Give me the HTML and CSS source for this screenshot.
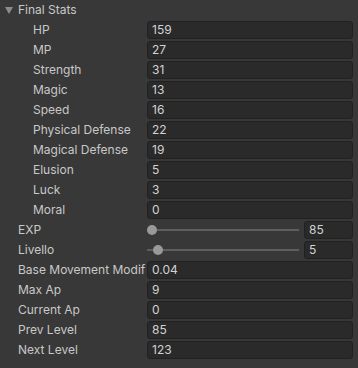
FILE: index.html
```html
<!DOCTYPE html>
<html>
<head>
<meta charset="utf-8">
<link rel="stylesheet" href="styles.css">
</head>
<body>
<div class="inspector">
  <div class="row header">
    <span class="fold"></span>
    <span class="label head-label">Final Stats</span>
  </div>
  <div class="row"><span class="label indent">HP</span><span class="field">159</span></div>
  <div class="row"><span class="label indent">MP</span><span class="field">27</span></div>
  <div class="row"><span class="label indent">Strength</span><span class="field">31</span></div>
  <div class="row"><span class="label indent">Magic</span><span class="field">13</span></div>
  <div class="row"><span class="label indent">Speed</span><span class="field">16</span></div>
  <div class="row"><span class="label indent">Physical Defense</span><span class="field">22</span></div>
  <div class="row"><span class="label indent">Magical Defense</span><span class="field">19</span></div>
  <div class="row"><span class="label indent">Elusion</span><span class="field">5</span></div>
  <div class="row"><span class="label indent">Luck</span><span class="field">3</span></div>
  <div class="row"><span class="label indent">Moral</span><span class="field">0</span></div>
  <div class="row">
    <span class="label">EXP</span>
    <div class="slider">
      <div class="track"><span class="thumb" style="left:0px"></span></div>
      <span class="field small">85</span>
    </div>
  </div>
  <div class="row">
    <span class="label">Livello</span>
    <div class="slider">
      <div class="track"><span class="thumb" style="left:6px"></span></div>
      <span class="field small">5</span>
    </div>
  </div>
  <div class="row"><span class="label">Base Movement Modif</span><span class="field">0.04</span></div>
  <div class="row"><span class="label">Max Ap</span><span class="field">9</span></div>
  <div class="row"><span class="label">Current Ap</span><span class="field">0</span></div>
  <div class="row"><span class="label">Prev Level</span><span class="field">85</span></div>
  <div class="row"><span class="label">Next Level</span><span class="field">123</span></div>
</div>
</body>
</html>
```

FILE: styles.css
```css
html, body {
  margin: 0;
  padding: 0;
  background: #383838;
}
.inspector {
  width: 358px;
  height: 368px;
  box-sizing: border-box;
  padding: 1px 5px 0 0;
  display: flex;
  flex-direction: column;
  gap: 2px;
  font-family: Inter, "Liberation Sans", sans-serif;
  font-size: 12px;
  color: #c8c8c8;
}
.row {
  height: 18px;
  display: flex;
  align-items: center;
}
.fold {
  width: 0;
  height: 0;
  margin-left: 5px;
  margin-right: 5px;
  border-left: 4px solid transparent;
  border-right: 4px solid transparent;
  border-top: 7px solid #8c8c8c;
}
.label {
  width: 147px;
  flex: none;
  box-sizing: border-box;
  padding-left: 18px;
  white-space: nowrap;
  overflow: hidden;
  line-height: 18px;
}
.label.head-label {
  width: auto;
  padding-left: 0;
}
.label.indent {
  padding-left: 33px;
}
.field {
  flex: 1;
  height: 18px;
  box-sizing: border-box;
  background: #2a2a2a;
  border: 1px solid #212121;
  border-radius: 3px;
  padding-left: 4px;
  line-height: 16px;
  color: #d2d2d2;
}
.slider {
  flex: 1;
  display: flex;
  align-items: center;
  gap: 5px;
  height: 18px;
}
.track {
  flex: 1;
  height: 2px;
  background: #5e5e5e;
  position: relative;
}
.thumb {
  position: absolute;
  top: -4px;
  width: 10px;
  height: 10px;
  border-radius: 50%;
  background: #999999;
}
.field.small {
  flex: none;
  width: 49px;
}
```
